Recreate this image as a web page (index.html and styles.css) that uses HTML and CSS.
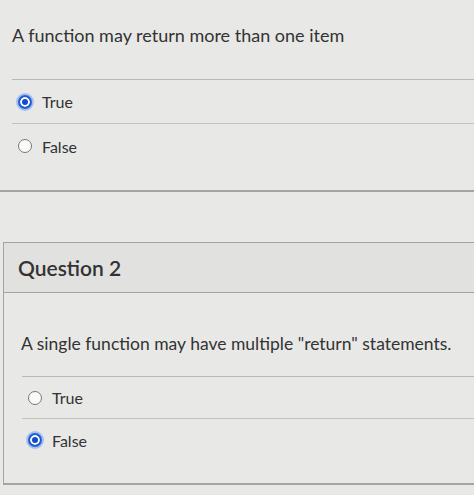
FILE: index.html
```html
<!DOCTYPE html>
<html lang="en">
<head>
    <meta charset="UTF-8">
    <meta name="viewport" content="width=device-width, initial-scale=1.0">
    <title>Quiz</title>
    <link rel="stylesheet" href="styles.css">
</head>
<body>
    <!-- end of question 1 -->
    <div class="question first">
        <div class="question-text">A function may return more than one item</div>
        <div class="answers">
            <label class="answer">
                <span class="radio checked"></span>
                <span class="answer-label">True</span>
            </label>
            <label class="answer">
                <span class="radio"></span>
                <span class="answer-label">False</span>
            </label>
        </div>
    </div>

    <!-- question 2 -->
    <div class="question card">
        <div class="question-header">Question 2</div>
        <div class="question-body">
            <div class="question-text">A single function may have multiple "return" statements.</div>
            <div class="answers">
                <label class="answer">
                    <span class="radio"></span>
                    <span class="answer-label">True</span>
                </label>
                <label class="answer">
                    <span class="radio checked"></span>
                    <span class="answer-label">False</span>
                </label>
            </div>
        </div>
    </div>
</body>
</html>
```

FILE: styles.css
```css
body {
    font-family: Lato, 'Open Sans', sans-serif;
    background-color: #e8e8e6;
    color: #333;
    margin: 0;
    overflow: hidden;
}

.question.first {
    border-bottom: 2px solid #a4a4a2;
    padding-bottom: 22px;
}

.question.first .question-text {
    font-size: 18px;
    padding: 24px 12px 0;
    height: 79px;
    box-sizing: border-box;
}

.answers {
    margin-left: 12px;
    border-top: 1px solid #b8b8b6;
}

.answer {
    display: flex;
    align-items: center;
    height: 44px;
    padding-left: 6px;
    border-bottom: 1px solid #c2c2c0;
    box-sizing: border-box;
    font-size: 16px;
}

.answer:last-child {
    border-bottom: none;
}

.radio {
    width: 14px;
    height: 14px;
    border: 1px solid #777;
    border-radius: 50%;
    background-color: #fafafa;
    box-sizing: border-box;
    margin-right: 10px;
    flex-shrink: 0;
}

.radio.checked {
    border: 2px solid #1f5fd6;
    background-color: #1749c9;
    box-shadow: inset 0 0 0 2px #fff, 0 0 0 2px #a9c0ee;
}

.question.card {
    margin-top: 50px;
    margin-left: 3px;
    border: 1px solid #a4a4a2;
    border-right: none;
    border-bottom-width: 2px;
}

.question-header {
    height: 49px;
    display: flex;
    align-items: center;
    padding-left: 14px;
    font-size: 21px;
    font-weight: 600;
    background-color: #e1e1df;
    border-bottom: 1px solid #a4a4a2;
}

.question-body {
    padding-bottom: 22px;
}

.question-body .question-text {
    font-size: 17.5px;
    white-space: nowrap;
    padding: 40px 0 0 17px;
    height: 83px;
    box-sizing: border-box;
}

.question-body .answers {
    margin-left: 18px;
}

.question-body .answer {
    height: 42px;
    padding-left: 6px;
}
```
